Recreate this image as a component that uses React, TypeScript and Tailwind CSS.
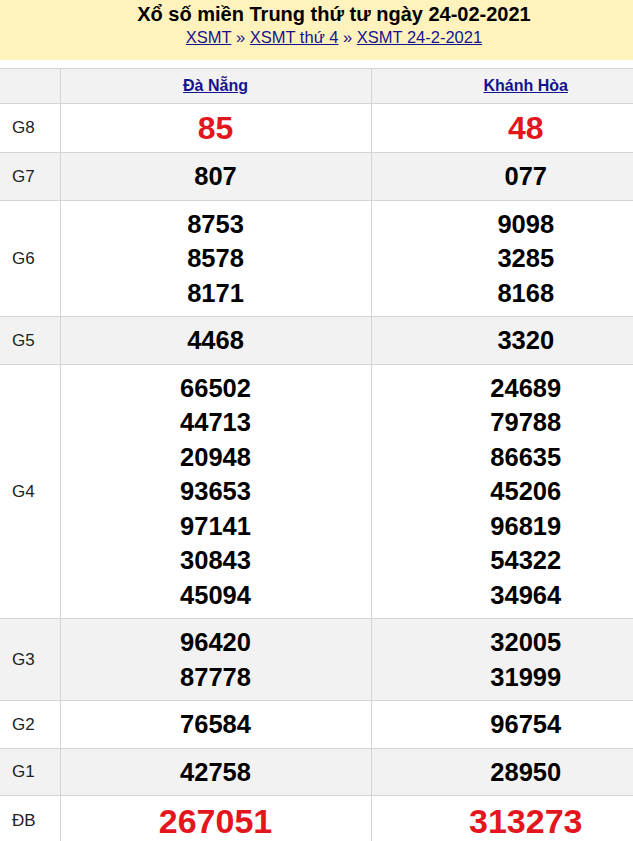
const font = { fontFamily: '"Liberation Sans", Arial, sans-serif' };

type Row = { label: string; a: string[]; b: string[]; red?: boolean; big?: boolean };

const rows: Row[] = [
  { label: "G8", a: ["85"], b: ["48"], red: true },
  { label: "G7", a: ["807"], b: ["077"] },
  { label: "G6", a: ["8753", "8578", "8171"], b: ["9098", "3285", "8168"] },
  { label: "G5", a: ["4468"], b: ["3320"] },
  {
    label: "G4",
    a: ["66502", "44713", "20948", "93653", "97141", "30843", "45094"],
    b: ["24689", "79788", "86635", "45206", "96819", "54322", "34964"],
  },
  { label: "G3", a: ["96420", "87778"], b: ["32005", "31999"] },
  { label: "G2", a: ["76584"], b: ["96754"] },
  { label: "G1", a: ["42758"], b: ["28950"] },
  { label: "ĐB", a: ["267051"], b: ["313273"], red: true, big: true },
];

function Cell({ nums, red, big }: { nums: string[]; red?: boolean; big?: boolean }) {
  return (
    <td className="border-l border-[#d4d4d4] py-[6px] text-center align-middle">
      {nums.map((n) => (
        <div
          key={n}
          className={
            red
              ? big
                ? "text-[34px] font-bold leading-[38px] text-[#e3151d]"
                : "text-[32px] font-bold leading-[36px] text-[#e3151d]"
              : "text-[25.5px] font-bold leading-[34.5px] text-black"
          }
        >
          {n}
        </div>
      ))}
    </td>
  );
}

export default function App() {
  return (
    <div className="w-[633px] overflow-hidden bg-white" style={font}>
      <div className="w-[680px]">
        {/* tiêu đề */}
        <div className="flex h-[60px] flex-col items-center bg-[#fff2bd] pr-[12px] pt-[3px]">
          <h1 className="text-[20px] font-bold leading-[23px] text-black">
            Xổ số miền Trung thứ tư ngày 24-02-2021
          </h1>
          <div className="text-[16.5px] leading-[22px] text-[#14148f]">
            <a href="#" className="underline">XSMT</a>
            <span> » </span>
            <a href="#" className="underline">XSMT thứ 4</a>
            <span> » </span>
            <a href="#" className="underline">XSMT 24-2-2021</a>
          </div>
        </div>

        {/* bảng kết quả */}
        <table className="mt-[8px] w-full table-fixed border-collapse">
          <colgroup>
            <col className="w-[60px]" />
            <col className="w-[311px]" />
            <col />
          </colgroup>
          <thead>
            <tr className="h-[35px] border-y border-[#d4d4d4] bg-[#f2f2f2]">
              <th />
              <th className="border-l border-[#d4d4d4] text-[16px] font-bold">
                <a href="#" className="text-[#14148f] underline">Đà Nẵng</a>
              </th>
              <th className="border-l border-[#d4d4d4] text-[16px] font-bold">
                <a href="#" className="text-[#14148f] underline">Khánh Hòa</a>
              </th>
            </tr>
          </thead>
          <tbody>
            {rows.map((r, i) => (
              <tr
                key={r.label}
                className={
                  "border-b border-[#d4d4d4] " + (i % 2 === 1 ? "bg-[#f2f2f2]" : "bg-white")
                }
              >
                <td className="pl-[12px] text-[17px] text-[#222]">{r.label}</td>
                <Cell nums={r.a} red={r.red} big={r.big} />
                <Cell nums={r.b} red={r.red} big={r.big} />
              </tr>
            ))}
          </tbody>
        </table>
      </div>
    </div>
  );
}
